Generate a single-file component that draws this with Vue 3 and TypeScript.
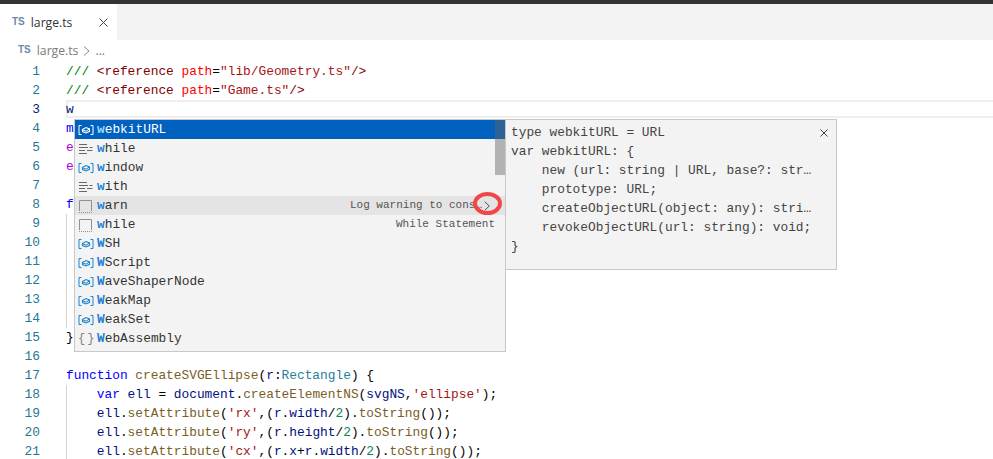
<script setup lang="ts">
type Tok = [string, string];
interface Line { n: number; toks: Tok[]; guide?: boolean; active?: boolean }
const lines: Line[] = [
  { n: 1, toks: [['c', '///'], ['', ' '], ['t', '&lt;reference'], ['', ' '], ['a', 'path'], ['', '='], ['s', '"lib/Geometry.ts"'], ['t', '/&gt;']] },
  { n: 2, toks: [['c', '///'], ['', ' '], ['t', '&lt;reference'], ['', ' '], ['a', 'path'], ['', '='], ['s', '"Game.ts"'], ['t', '/&gt;']] },
  { n: 3, toks: [['v', 'w']], active: true },
  { n: 4, toks: [['k', 'm']] },
  { n: 5, toks: [['p', 'e']] },
  { n: 6, toks: [['p', 'e']] },
  { n: 7, toks: [] },
  { n: 8, toks: [['k', 'f']] },
  { n: 9, toks: [], guide: true },
  { n: 10, toks: [], guide: true },
  { n: 11, toks: [], guide: true },
  { n: 12, toks: [], guide: true },
  { n: 13, toks: [], guide: true },
  { n: 14, toks: [], guide: true },
  { n: 15, toks: [['', '}']] },
  { n: 16, toks: [] },
  { n: 17, toks: [['k', 'function'], ['', ' '], ['f', 'createSVGEllipse'], ['', '('], ['v', 'r'], ['', ':'], ['y', 'Rectangle'], ['', ') {']] },
  { n: 18, guide: true, toks: [['', '    '], ['k', 'var'], ['', ' '], ['v', 'ell'], ['', ' = '], ['v', 'document'], ['', '.'], ['f', 'createElementNS'], ['', '('], ['v', 'svgNS'], ['', ','], ['s', "'ellipse'"], ['', ');']] },
  { n: 19, guide: true, toks: [['', '    '], ['v', 'ell'], ['', '.'], ['f', 'setAttribute'], ['', '('], ['s', "'rx'"], ['', ',('], ['v', 'r'], ['', '.'], ['v', 'width'], ['', '/'], ['n', '2'], ['', ').'], ['f', 'toString'], ['', '());']] },
  { n: 20, guide: true, toks: [['', '    '], ['v', 'ell'], ['', '.'], ['f', 'setAttribute'], ['', '('], ['s', "'ry'"], ['', ',('], ['v', 'r'], ['', '.'], ['v', 'height'], ['', '/'], ['n', '2'], ['', ').'], ['f', 'toString'], ['', '());']] },
  { n: 21, guide: true, toks: [['', '    '], ['v', 'ell'], ['', '.'], ['f', 'setAttribute'], ['', '('], ['s', "'cx'"], ['', ',('], ['v', 'r'], ['', '.'], ['v', 'x'], ['', '+'], ['v', 'r'], ['', '.'], ['v', 'width'], ['', '/'], ['n', '2'], ['', ').'], ['f', 'toString'], ['', '());']] },
];
const html = (l: Line) => l.toks.map(([c, t]) => `<span class="${c}">${t}</span>`).join('');

interface Item { icon: 'var' | 'text' | 'snip' | 'mod'; label: string; detail?: string; sel?: boolean; focus?: boolean }
const items: Item[] = [
  { icon: 'var', label: 'webkitURL', sel: true },
  { icon: 'text', label: 'while' },
  { icon: 'var', label: 'window' },
  { icon: 'text', label: 'with' },
  { icon: 'snip', label: 'warn', detail: 'Log warning to cons…', focus: true },
  { icon: 'snip', label: 'while', detail: 'While Statement' },
  { icon: 'var', label: 'WSH' },
  { icon: 'var', label: 'WScript' },
  { icon: 'var', label: 'WaveShaperNode' },
  { icon: 'var', label: 'WeakMap' },
  { icon: 'var', label: 'WeakSet' },
  { icon: 'mod', label: 'WebAssembly' },
];
const docs = `type webkitURL = URL
var webkitURL: {
    new (url: string | URL, base?: str…
    prototype: URL;
    createObjectURL(object: any): stri…
    revokeObjectURL(url: string): void;
}`;
</script>

<template>
  <div class="app">
    <div class="topbar"></div>
    <div class="tabs">
      <div class="tab">
        <span class="ts">TS</span>
        <span class="tabname">large.ts</span>
        <svg class="close" width="9" height="9" viewBox="0 0 9 9"><path d="M.5.5l8 8M8.5.5l-8 8" stroke="#424242" fill="none"/></svg>
      </div>
    </div>
    <div class="crumbs">
      <span class="ts">TS</span>
      <span class="crumbname">large.ts</span>
      <svg width="7" height="12" viewBox="0 0 7 12"><path d="M1 1.5L6 6l-5 4.5" stroke="#8a8a8a" fill="none"/></svg>
      <span>...</span>
    </div>
    <div class="editor">
      <div v-for="l in lines" :key="l.n" class="line">
        <span class="num" :class="{ on: l.active }">{{ l.n }}</span>
        <span class="code" :class="{ guide: l.guide, active: l.active }" v-html="html(l)"></span>
      </div>

      <div class="suggest">
        <div v-for="it in items" :key="it.label + it.icon" class="row" :class="{ sel: it.sel, focus: it.focus }">
          <svg v-if="it.icon === 'var'" class="ic" width="16" height="16" viewBox="0 0 16 16" fill="none" :stroke="it.sel ? '#fff' : '#1a85d4'">
            <path d="M3.5 3.5H1v9h2.5M12.5 3.5H15v9h-2.5"/>
            <path d="M4.5 7.5l3.5-2 3.5 1.4v2.4L8 11 4.5 9.6z" stroke-width="1.1"/>
            <path d="M5 8l3 1.2 3-2"/>
          </svg>
          <svg v-else-if="it.icon === 'text'" class="ic" width="16" height="16" viewBox="0 0 16 16" fill="none" stroke="#666">
            <path d="M1 3.5h8M1 6.5h9M11.5 6.5h3M1 9.5h6M9 9.5h5.5M1 12.5h8"/>
          </svg>
          <svg v-else-if="it.icon === 'snip'" class="ic" width="16" height="16" viewBox="0 0 16 16" fill="none" stroke="#909090">
            <path d="M1.5 13V2.5h12V13"/>
            <path d="M1 14.5h13.5" stroke-dasharray="1 1"/>
          </svg>
          <span v-else class="ic brace">{}</span>
          <span class="label"><b>{{ it.label[0] }}</b>{{ it.label.slice(1) }}</span>
          <span v-if="it.detail" class="detail">{{ it.detail }}</span>
          <svg v-if="it.focus" class="more" width="6" height="10" viewBox="0 0 6 10" fill="none" stroke="#555"><path d="M.7.7L5.3 5 .7 9.3"/></svg>
        </div>
        <div class="thumb"></div>
      </div>

      <div class="docs">
        <pre>{{ docs }}</pre>
        <svg class="docclose" width="8" height="8" viewBox="0 0 8 8"><path d="M.5.5l7 7M7.5.5l-7 7" stroke="#424242" fill="none"/></svg>
      </div>
      <div class="ring"></div>
    </div>
  </div>
</template>

<style>
html, body { margin: 0; background: #fff; overflow: hidden; }
</style>

<style scoped>
.app { width: 993px; height: 459px; overflow: hidden; display: flex; flex-direction: column; background: #fff; font-family: "Open Sans", sans-serif; }
.topbar { height: 4px; background: #333; flex: none; }
.tabs { height: 36px; background: #f3f3f3; display: flex; flex: none; }
.tab { width: 117px; background: #fff; display: flex; align-items: center; padding-left: 12px; box-sizing: border-box; font-size: 12.2px; color: #333; }
.tabname { margin-left: 6px; }
.close { margin-left: 27px; }
.ts { font: bold 10px "Liberation Sans", sans-serif; color: #6b8ba8; position: relative; top: -1px; }
.crumbs { height: 22px; flex: none; display: flex; align-items: center; gap: 5px; padding-left: 18px; font-size: 12.2px; color: #7a7a7a; box-sizing: border-box; padding-bottom: 1px; }
.crumbname { margin-left: 1px; }
.editor { position: relative; flex: 1; font: 12.83px/19px "Liberation Mono", monospace; color: #000; }
.line { display: flex; height: 19px; white-space: pre; }
.num { width: 40px; text-align: right; color: #237893; flex: none; }
.num.on { color: #0b216f; }
.code { margin-left: 26px; flex: 1; height: 19px; box-sizing: border-box; }
.code.guide { box-shadow: inset 1px 0 0 #d3d3d3; }
.code.active { height: 18px; border: solid #eee; border-width: 2px 0; line-height: 15px; box-shadow: inset 2px 0 0 #eee; }
:deep(.c) { color: #008000; }
:deep(.t) { color: #800000; }
:deep(.a) { color: #ff0000; }
:deep(.s) { color: #a31515; }
:deep(.k) { color: #0000ff; }
:deep(.p) { color: #af00db; }
:deep(.v) { color: #001080; }
:deep(.f) { color: #795e26; }
:deep(.y) { color: #267f99; }
:deep(.n) { color: #098658; }
.suggest { position: absolute; left: 74px; top: 57px; width: 432px; height: 233px; box-sizing: border-box; border: 1px solid #c8c8c8; background: #f3f3f3; overflow: hidden; }
.row { height: 19px; display: flex; align-items: center; padding-left: 3px; color: #333; position: relative; }
.row.sel { background: #0062be; color: #fff; }
.row.focus { background: #e4e4e4; }
.ic { flex: none; width: 16px; height: 16px; }
.brace { color: #808080; font: 12px/16px "Liberation Mono", monospace; letter-spacing: 2px; text-align: center; }
.label { margin-left: 3px; }
.label b { font-weight: bold; color: #1a7fd6; }
.row.sel .label b { color: #9dddff; }
.detail { position: absolute; right: 10px; color: #555; font-size: 11px; }
.row.focus .detail { right: 23px; }
.more { position: absolute; right: 15px; top: 5px; }
.thumb { position: absolute; right: 0; top: 0; width: 10px; height: 55px; background: rgba(100, 100, 100, .45); }
.docs { position: absolute; left: 505px; top: 57px; width: 332px; height: 151px; box-sizing: border-box; border: 1px solid #c8c8c8; background: #f3f3f3; }
.docs pre { margin: 0; padding: 3px 5px; font: inherit; color: #444; }
.docclose { position: absolute; right: 8px; top: 9px; }
.ring { position: absolute; left: 473px; top: 130px; width: 29px; height: 23px; box-sizing: border-box; border: 4px solid #f04848; border-radius: 50%; }
</style>
